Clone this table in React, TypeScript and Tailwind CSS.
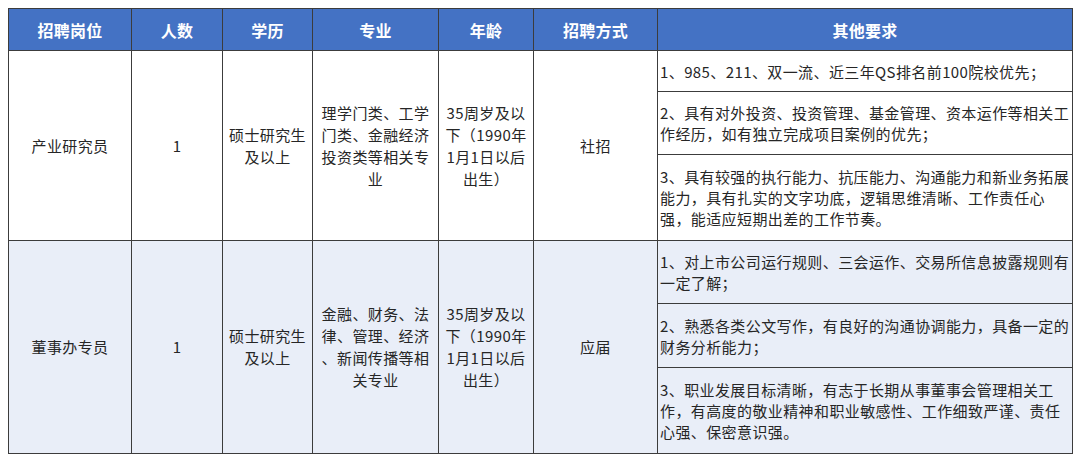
const font = {
  fontFamily: '"Noto Sans CJK SC", "Noto Sans", sans-serif',
};

type Job = {
  title: string;
  count: string;
  edu: string[];
  major: string[];
  age: string[];
  way: string;
  reqs: { lines: string[]; h: string }[];
  bg: string;
};

const jobs: Job[] = [
  {
    title: '产业研究员',
    count: '1',
    edu: ['硕士研究生', '及以上'],
    major: ['理学门类、工学', '门类、金融经济', '投资类等相关专', '业'],
    age: ['35周岁及以', '下（1990年', '1月1日以后', '出生）'],
    way: '社招',
    bg: 'bg-white',
    reqs: [
      { lines: ['1、985、211、双一流、近三年QS排名前100院校优先；'], h: 'h-[41px]' },
      { lines: ['2、具有对外投资、投资管理、基金管理、资本运作等相关工', '作经历，如有独立完成项目案例的优先；'], h: 'h-[63px]' },
      {
        lines: [
          '3、具有较强的执行能力、抗压能力、沟通能力和新业务拓展',
          '能力，具有扎实的文字功底，逻辑思维清晰、工作责任心',
          '强，能适应短期出差的工作节奏。',
        ],
        h: 'h-[86px]',
      },
    ],
  },
  {
    title: '董事办专员',
    count: '1',
    edu: ['硕士研究生', '及以上'],
    major: ['金融、财务、法', '律、管理、经济', '、新闻传播等相', '关专业'],
    age: ['35周岁及以', '下（1990年', '1月1日以后', '出生）'],
    way: '应届',
    bg: 'bg-[#e9eef8]',
    reqs: [
      { lines: ['1、对上市公司运行规则、三会运作、交易所信息披露规则有', '一定了解；'], h: 'h-[63px]' },
      { lines: ['2、熟悉各类公文写作，有良好的沟通协调能力，具备一定的', '财务分析能力；'], h: 'h-[64px]' },
      {
        lines: [
          '3、职业发展目标清晰，有志于长期从事董事会管理相关工',
          '作，有高度的敬业精神和职业敏感性、工作细致严谨、责任',
          '心强、保密意识强。',
        ],
        h: 'h-[86px]',
      },
    ],
  },
];

const heads = ['招聘岗位', '人数', '学历', '专业', '年龄', '招聘方式', '其他要求'];

function Lines({ lines }: { lines: string[] }) {
  return (
    <>
      {lines.map((l, i) => (
        <div key={i} className="whitespace-nowrap">
          {l}
        </div>
      ))}
    </>
  );
}

export default function App() {
  const cell = 'border border-[#3c3c3c] text-center align-middle px-[2px] leading-[22px]';
  return (
    <div className="w-[1080px] h-[463px] bg-white pt-[8px] pl-[8px]" style={font}>
      <table className="table-fixed border-collapse w-[1064px] text-[15px] tracking-[0.4px] text-[#262626]">
        <colgroup>
          <col className="w-[123px]" />
          <col className="w-[91px]" />
          <col className="w-[90px]" />
          <col className="w-[126px]" />
          <col className="w-[95px]" />
          <col className="w-[124px]" />
          <col className="w-[415px]" />
        </colgroup>
        <thead>
          <tr className="h-[42px] bg-[#4472c4]">
            {heads.map((h) => (
              <th
                key={h}
                className="border border-[#3c3c3c] text-white font-bold text-[16px] tracking-[0.3px] text-center align-middle"
              >
                {h}
              </th>
            ))}
          </tr>
        </thead>
        <tbody>
          {jobs.map((j) =>
            j.reqs.map((r, i) => (
              <tr key={j.title + i} className={`${r.h} ${j.bg}`}>
                {i === 0 && (
                  <>
                    <td rowSpan={3} className={cell}>{j.title}</td>
                    <td rowSpan={3} className={cell}>{j.count}</td>
                    <td rowSpan={3} className={cell}><Lines lines={j.edu} /></td>
                    <td rowSpan={3} className={cell}><Lines lines={j.major} /></td>
                    <td rowSpan={3} className={cell}><Lines lines={j.age} /></td>
                    <td rowSpan={3} className={cell}>{j.way}</td>
                  </>
                )}
                <td className="border border-[#3c3c3c] text-left align-middle pl-[2px] pr-0 leading-[21px]">
                  <Lines lines={r.lines} />
                </td>
              </tr>
            ))
          )}
        </tbody>
      </table>
    </div>
  );
}
